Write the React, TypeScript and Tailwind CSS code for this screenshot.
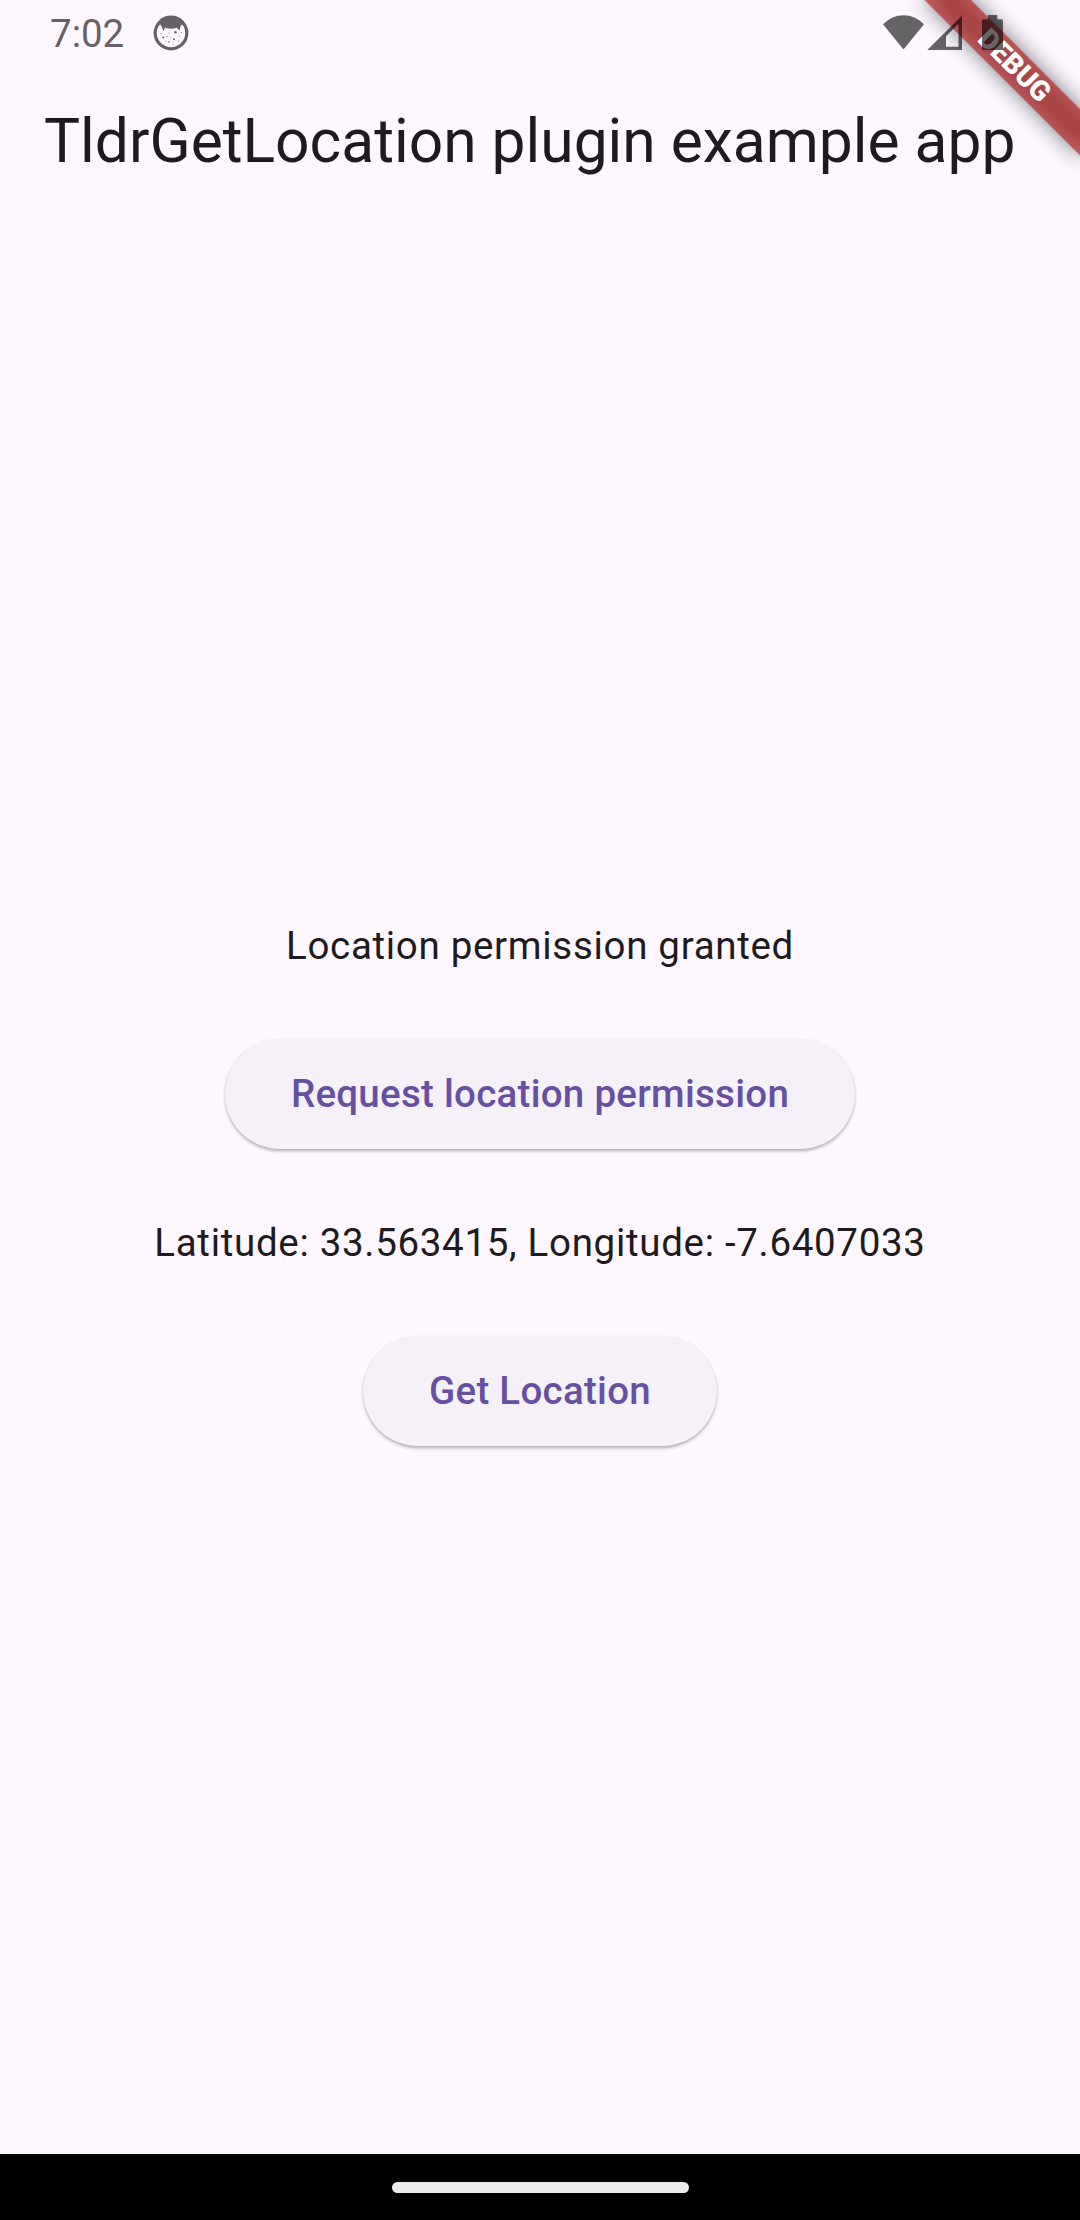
const BODY_TEXT = "flex h-[55px] items-center text-[38.5px] leading-[55px] tracking-[0.6875px] whitespace-nowrap text-[#1d1b20]";

function FaceIcon() {
  return (
    <svg className="ml-[29px] h-9 w-9" viewBox="0 0 36 36">
      <circle cx="18" cy="18" r="15.8" fill="none" stroke="#666267" strokeWidth="3.2" />
      <path
        d="M5 10.5 Q9 2 18 2 Q27 2 31 10.5 L28.7 9.5 L27 12.5 L26.8 15.6 L23.8 12.8 Q18 14.6 12.2 12.8 L10.2 16.2 L9.2 12.5 L7.3 9.5 Z"
        fill="#666267"
      />
      <g fill="#666267">
        <circle cx="10.3" cy="22.6" r="1" />
        <circle cx="21" cy="24.3" r="1" />
        <circle cx="22.4" cy="17.3" r="1.3" />
        <circle cx="16" cy="18" r="0.5" />
        <circle cx="14" cy="21.5" r="0.5" />
        <circle cx="17.5" cy="22" r="0.4" />
        <circle cx="16" cy="27" r="0.8" />
        <circle cx="20" cy="29" r="0.6" />
        <circle cx="26" cy="21" r="0.5" />
        <circle cx="8" cy="18.5" r="0.5" />
        <circle cx="12.5" cy="26.5" r="0.4" />
        <circle cx="25.5" cy="26" r="0.5" />
        <circle cx="28.5" cy="17.5" r="0.5" />
      </g>
    </svg>
  );
}

function SystemIcons() {
  return (
    <svg className="relative z-20 h-[66px] w-[130px]" viewBox="880 0 130 66" fill="#000000" fillOpacity="0.6">
      <path d="M903.5 49.5 L883 24.2 Q892 15.3 903.5 15.3 Q915 15.3 924 24.2 Z" />
      <path fillRule="evenodd" d="M927.3 50 L962 15.5 V50 Z M946 46.7 H958.5 V23.8 L946 36.3 Z" />
      <path d="M988 15 H997.2 V19.3 H1001.5 Q1003 19.3 1003 20.8 V48.5 Q1003 50 1001.5 50 H983.5 Q982 50 982 48.5 V20.8 Q982 19.3 983.5 19.3 H988 Z" />
    </svg>
  );
}

function DebugBanner() {
  return (
    <div className="absolute top-0 right-0 z-10 h-[220px] w-[220px] overflow-hidden">
      <div className="absolute top-0 left-[220px] h-0 w-0 origin-top-left rotate-45">
        <div className="absolute top-[77px] left-[-110px] h-[33px] w-[220px] bg-black/50 blur-[10.9px]" />
        <div className="absolute top-[77px] left-[-110px] flex h-[33px] w-[220px] items-center justify-center bg-[#b71c1c]/63 text-[28.05px] leading-none font-black text-white">
          DEBUG
        </div>
      </div>
    </div>
  );
}

function ElevatedButton({ label }: { label: string }) {
  return (
    <div className="flex h-[132px] items-center">
      <button className="flex h-[110px] items-center rounded-full bg-[#f6f1f9] px-[66px] text-[38.5px] leading-[55px] font-medium tracking-[0.275px] whitespace-nowrap text-[#6750a4] shadow-[0_2.5px_3px_rgba(0,0,0,0.25),0_0_2px_rgba(0,0,0,0.08)]">
        {label}
      </button>
    </div>
  );
}

export default function App() {
  return (
    <div className="relative flex h-[2220px] w-[1080px] flex-col overflow-hidden bg-[#fef7ff] font-['Roboto',sans-serif]">
      <DebugBanner />
      <header>
        <div className="flex h-[66px] items-center justify-between pr-[70px] pl-[50px]">
          <div className="flex items-center">
            <span className="pt-[3px] text-[38.5px] leading-none text-[#666267]">7:02</span>
            <FaceIcon />
          </div>
          <SystemIcons />
        </div>
        <h1 className="flex h-[154px] items-center pb-[3px] pl-11 text-[60.5px] leading-[77px] whitespace-nowrap text-[#1d1b20]">
          TldrGetLocation plugin example app
        </h1>
      </header>
      <main className="flex flex-1 flex-col items-center justify-center gap-[55px]">
        <p className={BODY_TEXT}>Location permission granted</p>
        <ElevatedButton label="Request location permission" />
        <p className={BODY_TEXT}>Latitude: 33.563415, Longitude: -7.6407033</p>
        <ElevatedButton label="Get Location" />
      </main>
      <footer className="flex h-[66px] items-center justify-center bg-black">
        <div className="h-[11px] w-[297px] rounded-full bg-[#ebebeb]" />
      </footer>
    </div>
  );
}
